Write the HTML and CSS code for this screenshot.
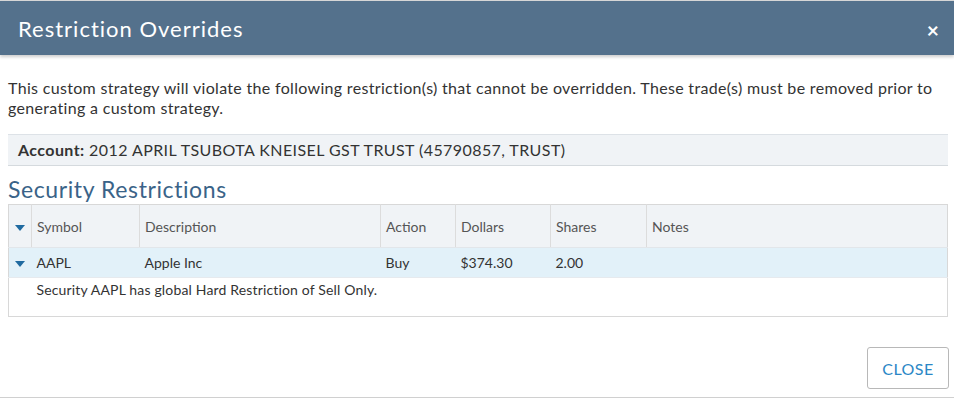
FILE: index.html
```html
<!doctype html>
<html>
<head>
<title>Restriction Overrides</title>
<meta charset="utf-8" />
<link rel="stylesheet" href="styles.css">
</head>

<body>
<div class="modal">
	<div class="modal-head">
		<h1>Restriction Overrides</h1>
		<span class="close-x">&times;</span>
	</div>
	<div class="modal-body">
		<p class="intro">This custom strategy will violate the following restriction(s) that cannot be overridden. These trade(s) must be removed prior to generating a custom strategy.</p>
		<div class="account"><b>Account:</b> 2012 APRIL TSUBOTA KNEISEL GST TRUST (45790857, TRUST)</div>
		<h2>Security Restrictions</h2>
		<table class="grid">
			<tr class="head">
				<th class="caret-col"><i class="caret"></i></th>
				<th class="c-sym">Symbol</th>
				<th class="c-desc">Description</th>
				<th class="c-act">Action</th>
				<th class="c-dol">Dollars</th>
				<th class="c-sh">Shares</th>
				<th>Notes</th>
			</tr>
			<tr class="row">
				<td class="caret-col"><i class="caret"></i></td>
				<td>AAPL</td>
				<td>Apple Inc</td>
				<td>Buy</td>
				<td>$374.30</td>
				<td>2.00</td>
				<td></td>
			</tr>
			<tr class="detail">
				<td></td>
				<td colspan="6">Security AAPL has global Hard Restriction of Sell Only.</td>
			</tr>
		</table>
	</div>
	<div class="modal-foot">
		<button class="btn">CLOSE</button>
	</div>
</div>
</body>
</html>
```

FILE: styles.css
```css
body { margin: 0; background: #fff; font-family: Lato, 'Open Sans', sans-serif; color: #333; }
.modal { border-top: 1px solid #d8d8d8; border-bottom: 1px solid #d0d0d0; height: 396px; display: flex; flex-direction: column; }

.modal-head { background: #54718c; height: 54px; display: flex; align-items: center; justify-content: space-between; padding: 0 15px 0 18px; box-shadow: 0 2px 3px rgba(0,0,0,0.2); }
.modal-head h1 { margin: 0; font-size: 22px; letter-spacing: 1px; font-weight: normal; color: #fff; }
.close-x { color: #fff; font-size: 21px; font-weight: bold; margin-top: 2px; }

.modal-body { padding: 0 6px 0 8px; flex: 1; }
.intro { margin: 23px 0 16px; font-size: 16px; letter-spacing: 0.32px; line-height: 20px; color: #333; }
.account { background: #f0f3f6; border-top: 1px solid #dde2e7; border-bottom: 1px solid #d5dade; padding: 5px 10px; font-size: 16px; letter-spacing: 0.42px; line-height: 20px; color: #333; }
.account b { font-weight: bold; }
h2 { margin: 10px 0 2px; font-size: 23px; letter-spacing: 0.6px; line-height: 26px; font-weight: normal; color: #3a6388; }

.grid { width: 100%; border-collapse: collapse; border: 1px solid #d8d8d8; font-size: 14px; color: #333; }
.grid th { background: #f0f3f6; height: 42px; padding: 0 5px; text-align: left; font-weight: normal; color: #555; border-left: 1px solid #dcdcdc; border-bottom: 1px solid #e2e6ea; }
.grid th:first-child { border-left: none; }
.grid td { height: 29px; padding: 0 5px; }
.grid .row td { background: #e2f1f9; border-bottom: 1px solid #e6eaee; }
.grid .detail td { height: 35px; vertical-align: top; padding-top: 3px; font-size: 14px; letter-spacing: 0.16px; }
.caret-col { width: 12px; }
.c-sym { width: 97px; }
.c-desc { width: 230px; }
.c-act { width: 64px; }
.c-dol { width: 84px; }
.c-sh { width: 85px; }
.caret { display: inline-block; width: 0; height: 0; border-left: 5px solid transparent; border-right: 5px solid transparent; border-top: 6px solid #1f6aa0; vertical-align: middle; margin-left: 1px; }

.modal-foot { display: flex; justify-content: flex-end; padding: 0 5px 8px 0; }
.btn { background: #fff; border: 1px solid #b8b8b8; border-radius: 3px; width: 82px; height: 42px; font-family: Lato, sans-serif; font-size: 16px; letter-spacing: 0.5px; color: #2b87c6; }
```
